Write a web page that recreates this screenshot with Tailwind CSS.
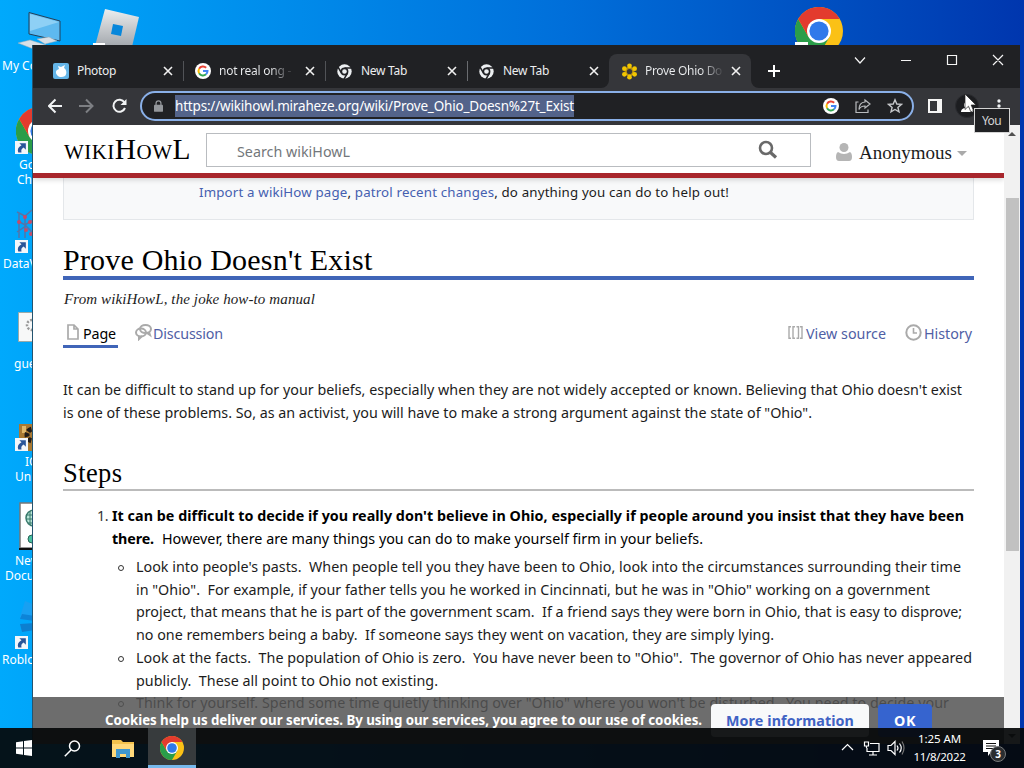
<!DOCTYPE html>
<html lang="en">
<head>
    <meta charset="UTF-8">
    <meta name="viewport" content="width=device-width, initial-scale=1.0">
    <title>Prove Ohio Doesn't Exist - wikiHowL</title>
    <script src="https://cdn.jsdelivr.net/npm/@tailwindcss/browser@4"></script>
</head>
<body class="relative w-[1024px] h-[768px] overflow-hidden bg-linear-to-r from-[#00a9fc] via-[#006fda] via-55% to-[#0036ae] font-['Noto_Sans',sans-serif] whitespace-nowrap">
    <!-- Shared icons -->
    <svg class="hidden">
        <symbol id="chrome" viewBox="0 0 48 48">
            <circle cx="24" cy="24" r="24" fill="#fbc116"/>
            <path d="M24 24 13.6 30 3.2 12A24 24 0 0 0 24 48L34.4 30z" fill="#2a9d49"/>
            <path d="M3.2 12A24 24 0 0 1 44.8 12H24L13.6 30z" fill="#e33b2e"/>
            <circle cx="24" cy="24" r="12" fill="#fff"/>
            <circle cx="24" cy="24" r="9.6" fill="#3079ea"/>
        </symbol>
        <symbol id="chrome-mono" viewBox="0 0 48 48">
            <circle cx="24" cy="24" r="23" fill="#eceff1"/>
            <circle cx="24" cy="24" r="10" fill="none" stroke="#202124" stroke-width="5"/>
            <path d="M24 13h23M14.500 29.500 3 9.500M33.500 29.500 22 49" fill="none" stroke="#202124" stroke-width="5"/>
        </symbol>
        <symbol id="google" viewBox="0 0 48 48">
            <circle cx="24" cy="24" r="24" fill="#fff"/>
            <g fill="none" stroke-width="6">
                <path d="M33.500 14.500A13.500 13.500 0 0 0 12.300 17.300" stroke="#ea4335"/>
                <path d="M12.300 17.300A13.500 13.500 0 0 0 12.300 30.700" stroke="#fbbc05"/>
                <path d="M12.300 30.700A13.500 13.500 0 0 0 33 34" stroke="#34a853"/>
                <path d="M33 34A13.500 13.500 0 0 0 37.500 24H24" stroke="#4285f4"/>
            </g>
        </symbol>
        <symbol id="close" viewBox="0 0 10 10">
            <path d="M1 1l8 8M9 1 1 9" stroke="#f1f1f1" stroke-width="1.6" fill="none"/>
        </symbol>
        <symbol id="shortcut" viewBox="0 0 12 12">
            <path d="M0 0h12v12H0z" fill="#f3f6fa"/>
            <path d="M4 2h6v6L8 6C6 7 5.500 8.500 6 10.500H3C2 8 3 5.500 6 4z" fill="#2a5599"/>
        </symbol>
    </svg>

    <!-- Desktop icons -->
    <div class="text-[12px] leading-[15px] text-white">
        <svg class="absolute left-[16px] top-[10px]" width="48" height="40" viewBox="0 0 48 40">
            <path d="M13 2.500 44 11v20L13 24z" fill="#5eb9ef" stroke="#233f58"/>
            <path d="M14 4 43 12 14 21z" fill="#8ed0f5"/>
            <path d="M21 29l12-2 8 4-12 3zM2 33l12-3 16 5-10 5z" fill="#d8e0e7" stroke="#9aacb9" stroke-width=".5"/>
        </svg>
        <div class="absolute left-[2px] top-[58px]">My Computer</div>
        <svg class="absolute left-[92px] top-[8px]" width="50" height="40" viewBox="0 0 50 40">
            <defs><linearGradient id="rbx" x1="0" y1="0" x2="0" y2="1"><stop stop-color="#eceeef"/><stop offset="1" stop-color="#9a9fa5"/></linearGradient></defs>
            <path d="M13 1 47 9 39 43 3 38z" fill="url(#rbx)"/>
            <path d="M21 16l10 2-2 10-10-2z" fill="#0787db"/>
            <path d="M1 35h12v5H1z" fill="#fff"/><path d="M4 37h7v3H4z" fill="#333"/>
        </svg>
        <svg class="absolute left-[795px] top-[7px]" width="48" height="48"><use href="#chrome"/></svg>
        <div class="absolute left-[795px] top-[42px] w-[13px] h-1 bg-white"></div>
        <svg class="absolute left-[16px] top-[107px]" width="48" height="48"><use href="#chrome"/></svg>
        <svg class="absolute left-[15px] top-[141px]" width="13" height="13"><use href="#shortcut"/></svg>
        <div class="absolute left-[19px] top-[157px]">Google</div>
        <div class="absolute left-[17px] top-[172px]">Chrome</div>
        <svg class="absolute left-[15px] top-[207px]" width="20" height="34" viewBox="0 0 20 34">
            <path d="M2 5l8 4 7-6M3 14l7 4 8-5M2 25l9-6 7 7M10 9v22M4 6v25" fill="none" stroke="#5375aa" stroke-width="1.500"/>
            <g fill="#c64b68"><circle cx="4" cy="15" r="2"/><circle cx="10" cy="10" r="2"/><circle cx="15" cy="15" r="2"/><circle cx="11" cy="23" r="2"/><circle cx="16" cy="27" r="2"/></g>
        </svg>
        <svg class="absolute left-[15px] top-[240px]" width="13" height="13"><use href="#shortcut"/></svg>
        <div class="absolute left-[3px] top-[256px]">DataViz</div>
        <svg class="absolute left-[18px] top-[312px]" width="20" height="30" viewBox="0 0 20 30">
            <path d="M.5.500h22v29H.5z" fill="#f7f8f8" stroke="#9aa"/>
            <circle cx="14" cy="13" r="5" fill="none" stroke="#999" stroke-width="2.500" stroke-dasharray="2 1.500"/>
        </svg>
        <div class="absolute left-[14px] top-[356px]">guest</div>
        <svg class="absolute left-[19px] top-[423px]" width="20" height="28" viewBox="0 0 20 28">
            <path d="M0 1h20v27H0z" fill="#a97932"/>
            <path d="M3 3h4v7H3z" fill="#e0b669"/>
            <circle cx="14" cy="12" r="6" fill="none" stroke="#201b19" stroke-width="5" stroke-dasharray="4 1.500"/>
        </svg>
        <svg class="absolute left-[15px] top-[438px]" width="13" height="13"><use href="#shortcut"/></svg>
        <div class="absolute left-[25px] top-[454px]">IObit</div>
        <div class="absolute left-[15px] top-[469px]">Unlocker</div>
        <svg class="absolute left-[19px] top-[502px]" width="20" height="48" viewBox="0 0 20 48">
            <path d="M1 1h20v45H1z" fill="#fff" stroke="#777" stroke-width="1.500"/>
            <path d="M0 46h20v2H0z" fill="#111"/>
            <circle cx="15" cy="16" r="8" fill="#b9e6d7" stroke="#39796b" stroke-width="1.500"/>
            <path d="M7 13h10M7 17h10M9 21h8M11 9v14" stroke="#39796b"/>
            <circle cx="13" cy="37" r="4" fill="#49c1a2" stroke="#286355"/>
        </svg>
        <div class="absolute left-[15px] top-[553px]">New</div>
        <div class="absolute left-[5px] top-[568px]">Document</div>
        <svg class="absolute left-[19px] top-[600px]" width="16" height="40" viewBox="0 0 16 40">
            <path d="M6 1 16 5v14L1 17z" fill="#18a0f2"/><path d="M3 14l13 2v5L1 19z" fill="#0d84d8"/><path d="M1 24l15-1v7L3 32z" fill="#0c7fd0"/>
        </svg>
        <svg class="absolute left-[15px] top-[636px]" width="13" height="13"><use href="#shortcut"/></svg>
        <div class="absolute left-[2px] top-[652px]">Roblox</div>
    </div>

    <!-- Browser window -->
    <div class="absolute left-[32px] top-[45px] w-[988px] h-[699px] overflow-hidden border-l border-[#24546f] bg-white flex flex-col">
        <!-- Tabs -->
        <div class="h-[43px] shrink-0 bg-[#202124] flex pt-[9px] pl-[10px] text-[12px] text-[#eceef0] leading-[34px]">
            <div class="w-[142px] flex items-center pl-[10px] pr-[12px]">
                <svg width="16" height="16" viewBox="0 0 16 16"><rect width="16" height="16" rx="2" fill="#64b5e8"/><path d="M5 3l3 1 4-2-1 3c3 2 3 6 1 8-3 2-7 1-8-1-2-3-1-5 2-6z" fill="#fff"/></svg>
                <span class="ml-2 flex-1"><span data-w="39">Photop</span></span>
                <svg width="10" height="10"><use href="#close"/></svg>
            </div>
            <div class="w-[142px] flex items-center pl-[10px] pr-[12px] relative">
                <div class="absolute left-[-2px] top-[7px] w-px h-5 bg-[#515357]"></div>
                <svg width="16" height="16"><use href="#google"/></svg>
                <span class="ml-2 flex-1 bg-linear-to-r from-[#eceef0] from-60% to-[#45464a] to-80% bg-clip-text text-transparent"><span data-w="72">not real ong -</span></span>
                <svg width="10" height="10"><use href="#close"/></svg>
            </div>
            <div class="w-[142px] flex items-center pl-[10px] pr-[12px] relative">
                <div class="absolute left-[-2px] top-[7px] w-px h-5 bg-[#515357]"></div>
                <svg width="15" height="15"><use href="#chrome-mono"/></svg>
                <span class="ml-[9px] flex-1"><span data-w="46">New Tab</span></span>
                <svg width="10" height="10"><use href="#close"/></svg>
            </div>
            <div class="w-[142px] flex items-center pl-[10px] pr-[12px] relative">
                <div class="absolute left-[-2px] top-[7px] w-px h-5 bg-[#6a6c70]"></div>
                <svg width="15" height="15"><use href="#chrome-mono"/></svg>
                <span class="ml-[9px] flex-1"><span data-w="46">New Tab</span></span>
                <svg width="10" height="10"><use href="#close"/></svg>
            </div>
            <div class="w-[142px] flex items-center pl-[12px] pr-[10px] bg-[#35363a] rounded-t-lg relative ml-[-2px]">
                <svg class="absolute -left-2 bottom-0" width="8" height="8"><path d="M8 0v8H0a8 8 0 0 0 8-8" fill="#35363a"/></svg>
                <svg class="absolute -right-2 bottom-0" width="8" height="8"><path d="M0 0v8h8a8 8 0 0 1-8-8" fill="#35363a"/></svg>
                <svg width="17" height="17" viewBox="0 0 18 18" fill="#f2c600"><circle cx="9" cy="9" r="4" fill="none" stroke="#b28c12" stroke-width="2.500"/><circle cx="9" cy="3" r="2.500"/><circle cx="9" cy="15" r="2.500"/><circle cx="3.600" cy="6" r="2.500"/><circle cx="14.400" cy="6" r="2.500"/><circle cx="3.600" cy="12" r="2.500"/><circle cx="14.400" cy="12" r="2.500"/></svg>
                <span class="ml-[7px] flex-1 bg-linear-to-r from-[#eceef0] from-65% to-[#45464a] to-90% bg-clip-text text-transparent"><span data-w="77">Prove Ohio Do</span></span>
                <svg width="10" height="10"><use href="#close"/></svg>
            </div>
            <svg class="ml-[17px] mt-[11px]" width="12" height="12"><path d="M6 0v12M0 6h12" stroke="#fff" stroke-width="2"/></svg>
            <svg class="ml-[74px]" width="160" height="20" viewBox="0 0 160 20" fill="none" stroke="#f4f4f4" stroke-width="1.200">
                <path d="M1 3.500l5 5.500 5-5.500M47 6.500h10M93.500 1.500h9v9h-9zM139 1l10 10M149 1l-10 10"/>
            </svg>
        </div>
        <!-- Toolbar -->
        <div class="h-[37px] shrink-0 bg-[#35363a] flex items-center pl-[15px] pb-px">
            <svg width="80" height="18" viewBox="0 0 80 18" fill="none" stroke-width="2">
                <path d="M14 9H1M7.500 2.500 1 9l6.500 6.500" stroke="#f1f3f4"/>
                <path d="M31 9h13M38 2.500 44.500 9 38 15.500" stroke="#7d7f83"/>
                <path d="M76.500 5.500A6 6 0 1 0 77 11" stroke="#f1f3f4"/>
                <path d="M78.500 2v6h-6z" fill="#f1f3f4"/>
            </svg>
            <div class="ml-[12px] w-[774px] h-[30px] rounded-full border-2 border-[#8ab0e8] bg-[#202124] flex items-center pl-[12px]">
                <svg class="mb-px" width="9" height="12" viewBox="0 0 10 13"><path d="M1 5h8q1 0 1 1v6q0 1-1 1H1q-1 0-1-1V6q0-1 1-1" fill="#94979b"/><path d="M2.300 6V3.500a2.700 2.700 0 0 1 5.400 0V6" fill="none" stroke="#94979b" stroke-width="1.400"/></svg>
                <div class="ml-[12px] h-[22px] bg-[#53638a] text-white text-[13.5px] leading-[22px]"><span data-w="399">https://wikihowl.miraheze.org/wiki/Prove_Ohio_Doesn%27t_Exist</span></div>
                <svg class="ml-auto" width="16" height="16"><use href="#google"/></svg>
                <svg class="ml-[16px]" width="16" height="16" viewBox="0 0 16 16" fill="none" stroke="#b9bbbe" stroke-width="1.200"><path d="M3.500 4H1v10.500h12v-3M10 2l5 4-5 4V8C7 8 5 9 4 11.500 4 7 6.500 4.300 10 4z"/></svg>
                <svg class="ml-[16px] mr-[9px]" width="16" height="16" viewBox="0 0 16 16" fill="none" stroke="#c6c8cb" stroke-width="1.400"><path d="M8 1.800l1.800 4.200 4.600.4-3.500 3 1.100 4.500L8 11.500l-4 2.400 1.100-4.500-3.500-3L6.200 6z"/></svg>
            </div>
            <svg class="ml-[14px]" width="14" height="14"><path d="M0 0h14v14H0z" fill="#f5f5f5"/><path d="M2 2h7v10H2z" fill="#35363a"/></svg>
            <div class="ml-[13px] w-[24px] h-[24px] rounded-full bg-[#1c1d20] border border-[#2a2b2f] flex items-end justify-center pb-[5px]">
                <svg width="14" height="10"><circle cx="7" cy="3" r="3" fill="#fff"/><path d="M1 10c0-6 12-6 12 0z" fill="#fff"/></svg>
            </div>
            <svg class="ml-[18px]" width="4" height="16" fill="#f1f3f4"><circle cx="2" cy="3" r="1.700"/><circle cx="2" cy="8" r="1.700"/><circle cx="2" cy="13" r="1.700"/></svg>
        </div>

        <div class="flex flex-1 min-h-0">
            <div class="w-[971px] relative overflow-hidden text-[#1c1c1c]">
                <!-- Site header -->
                <div class="h-[53px] border-b-[5px] border-[#a8262c] flex items-center pl-[31px] relative shadow-[0_2px_5px_rgba(0,0,0,.15)] bg-white">
                    <div class="w-[142px] text-[29.5px] leading-[48px] text-black font-['Liberation_Serif',serif] [font-variant:small-caps]"><span data-w="127">wikiHowL</span></div>
                    <div class="w-[605px] h-[34px] mt-[2px] border border-[#b9bcc0] flex items-center pl-[30px] text-[14.3px] text-[#73777b]">
                        <span class="mt-[3px]" data-w="113">Search wikiHowL</span>
                        <svg class="ml-auto mr-[32px]" width="20" height="20" viewBox="0 0 20 20" fill="none" stroke="#696969"><circle cx="8" cy="8" r="6" stroke-width="2.600"/><path d="M12.500 12.500l5.500 5" stroke-width="3.200"/></svg>
                    </div>
                    <svg class="ml-[25px] mt-[6px]" width="16" height="18" viewBox="0 0 16 18" fill="#b5b5b5"><circle cx="8" cy="4.500" r="4.500"/><path d="M2 9q6 4 12 0 2 1 2 5 0 4-3 4H3q-3 0-3-4 0-4 2-5"/></svg>
                    <span class="ml-[7px] mt-[9px] text-[19px] font-['Liberation_Serif',serif]"><span data-w="93">Anonymous</span></span>
                    <svg class="ml-[5px] mt-[8px]" width="10" height="5"><path d="M0 0h10L5 5z" fill="#aaa"/></svg>
                </div>
                <!-- Article -->
                <div class="ml-[30px] w-[911px] text-[14.3px]">
                    <div class="h-[42px] bg-[#f8f9fa] border border-t-0 border-[#e4e7ea] pl-[135px] leading-[28px] text-[13.3px]">
                        <span data-w="530"><span class="text-[#4560b0]">Import a wikiHow page</span>, <span class="text-[#4560b0]">patrol recent changes</span>, do anything you can do to help out!</span>
                    </div>
                    <h1 class="h-[60px] border-b-4 border-[#4065b8] pt-[22px] text-[30px] leading-[35px] text-black font-['Liberation_Serif',serif]"><span data-w="309.5">Prove Ohio Doesn't Exist</span></h1>
                    <div class="h-[38px] pl-px leading-[38px] text-[15px] italic font-['Liberation_Serif',serif]"><span data-w="251">From wikiHowL, the joke how-to manual</span></div>
                    <div class="h-[30px] flex leading-[31px] text-[#5060a5]">
                        <div class="w-[55px] border-b-3 border-[#4065b8] flex text-black pl-[4px]">
                            <svg class="mt-[6px] mr-[4px]" width="12" height="16" viewBox="0 0 12 16" fill="none" stroke="#aaa" stroke-width="1.700"><path d="M1 1h6l4 4v10H1zM7 1v4h4"/></svg>
                            <span data-w="33">Page</span>
                        </div>
                        <svg class="ml-[17px] mt-[6px] mr-[1px]" width="17" height="17" viewBox="0 0 17 17" fill="none" stroke="#aaa" stroke-width="2"><ellipse cx="10.500" cy="5" rx="5.500" ry="4"/><ellipse cx="6" cy="8.500" rx="5" ry="4"/><path d="M4 12v3l3-3M14 8l1 3-3-2"/></svg>
                        <span data-w="70">Discussion</span>
                        <svg class="ml-auto mt-[8px] mr-[3px]" width="15" height="13" fill="none" stroke="#aaa" stroke-width="1.400"><path d="M3 .7H1v11.600h2M7 .7H5v11.600h2M8.500.7h2v11.600h-2M12 .7h2v11.600h-2"/></svg>
                        <span data-w="80">View source</span>
                        <svg class="ml-[19px] mt-[6px] mr-[2px]" width="17" height="17" fill="none" stroke="#aaa"><circle cx="8.500" cy="8.500" r="7.200" stroke-width="2"/><path d="M8.500 4v5H12" stroke-width="1.600"/></svg>
                        <span class="mr-[2px]" data-w="48">History</span>
                    </div>
                    <div class="mt-[30px] leading-[23px]">
                        <div><span data-w="899">It can be difficult to stand up for your beliefs, especially when they are not widely accepted or known. Believing that Ohio doesn't exist</span></div>
                        <div><span data-w="749">is one of these problems. So, as an activist, you will have to make a strong argument against the state of "Ohio".</span></div>
                    </div>
                    <h2 class="mt-[30px] pt-[4px] border-b-2 border-[#bbb] text-[26.5px] leading-[31px] text-black font-['Liberation_Serif',serif]"><span data-w="59.5">Steps</span></h2>
                    <div class="mt-[13px] leading-[23px] flex text-black">
                        <div class="w-[49px] shrink-0 pl-[34px] text-[#333]"><span data-w="11">1.</span></div>
                        <div>
                            <div class="font-bold"><span data-w="852">It can be difficult to decide if you really don't believe in Ohio, especially if people around you insist that they have been</span></div>
                            <div><b data-w="42">there.</b><span class="ml-[8px]" data-w="541">However, there are many things you can do to make yourself firm in your beliefs.</span></div>
                        </div>
                    </div>
                    <div class="mt-[6px] pl-[55px] leading-[22.7px]">
                        <div class="flex">
                            <div class="mt-[9px] mr-[12px] w-[6px] h-[6px] shrink-0 rounded-full border border-[#333]"></div>
                            <div>
                                <div><span data-w="825">Look into people's pasts.&nbsp; When people tell you they have been to Ohio, look into the circumstances surrounding their time</span></div>
                                <div><span data-w="794">in "Ohio".&nbsp; For example, if your father tells you he worked in Cincinnati, but he was in "Ohio" working on a government</span></div>
                                <div><span data-w="826">project, that means that he is part of the government scam.&nbsp; If a friend says they were born in Ohio, that is easy to disprove;</span></div>
                                <div><span data-w="638">no one remembers being a baby.&nbsp; If someone says they went on vacation, they are simply lying.</span></div>
                            </div>
                        </div>
                        <div class="flex">
                            <div class="mt-[9px] mr-[12px] w-[6px] h-[6px] shrink-0 rounded-full border border-[#333]"></div>
                            <div>
                                <div><span data-w="836">Look at the facts.&nbsp; The population of Ohio is zero.&nbsp; You have never been to "Ohio".&nbsp; The governor of Ohio has never appeared</span></div>
                                <div><span data-w="302">publicly.&nbsp; These all point to Ohio not existing.</span></div>
                            </div>
                        </div>
                        <div class="flex">
                            <div class="mt-[9px] mr-[12px] w-[6px] h-[6px] shrink-0 rounded-full border border-[#333]"></div>
                            <span data-w="813">Think for yourself. Spend some time quietly thinking over "Ohio" where you won't be disturbed.&nbsp; You need to decide your</span>
                        </div>
                    </div>
                </div>
                <!-- Cookie notice -->
                <div class="absolute left-0 bottom-0 w-full h-[47px] bg-[#545454]/85 flex pl-[72px] pt-[7px] text-[13.3px] font-bold text-white leading-[33px]">
                    <span class="w-[606px]"><span data-w="597">Cookies help us deliver our services. By using our services, you agree to our use of cookies.</span></span>
                    <div class="w-[158px] h-[33px] rounded-sm bg-[#f8f9fa] text-[#3f62c4] pl-[15px] text-[14.3px]"><span data-w="128">More information</span></div>
                    <div class="ml-[9px] w-[54px] h-[33px] rounded-sm bg-[#3664cf] pl-[16px] text-[14.3px]"><span data-w="22">OK</span></div>
                </div>
            </div>
            <!-- Scrollbar -->
            <div class="w-[16px] bg-[#f1f1f1] flex flex-col items-center">
                <svg class="mt-[7px]" width="8" height="4"><path d="M0 4h8L4 0z" fill="#505050"/></svg>
                <div class="mt-[62px] w-[13px] h-[353px] bg-[#c1c1c1]"></div>
                <svg class="mt-auto mb-[6px]" width="8" height="4"><path d="M0 0h8L4 4z" fill="#505050"/></svg>
            </div>
        </div>
    </div>

    <!-- Tooltip and pointer -->
    <div class="absolute left-[974px] top-[108px] w-[36px] h-[25px] bg-[#202124] border border-[#d4d4d4] text-[#d5d5d5] text-[12px] leading-[23px] pl-[7px]"><span data-w="19">You</span></div>
    <svg class="absolute left-[964px] top-[93px]" width="13" height="20" viewBox="0 0 13 20"><path d="M1 1v15.500l3.500-3.300 2.300 5.600 2.700-1.200L7.200 12H12z" fill="#fff" stroke="#222" stroke-width=".7"/></svg>

    <!-- Taskbar -->
    <div class="absolute left-0 bottom-0 w-full h-[40px] bg-[#050709]/93 flex items-center text-white">
        <svg class="ml-[16px]" width="16" height="16" fill="#fff"><path d="M0 2.300 7 1.300V7.600H0zM8 1.100 16 0v7.600H8zM0 8.500h7v6.300L0 13.800zM8 8.500h8V16l-8-1.100z"/></svg>
        <svg class="ml-[32px]" width="17" height="17" fill="none" stroke="#fff" stroke-width="1.500"><circle cx="10.500" cy="6" r="5"/><path d="M7 10 .8 16.200"/></svg>
        <svg class="ml-[31px]" width="22" height="19" viewBox="0 0 22 19"><path d="M0 1h9l2 2h11v15H0z" fill="#f3c24d"/><path d="M0 5h22v13H0z" fill="#ffd97a"/><path d="M4 19v-9h14v9h-4v-4H8v4z" fill="#3f97cf"/></svg>
        <div class="ml-[14px] w-[48px] h-full bg-[#373b3d] border-b-3 border-[#76b9ed] flex items-center justify-center">
            <svg class="mt-[3px]" width="24" height="24"><use href="#chrome"/></svg>
        </div>
        <svg class="ml-auto" width="64" height="16" viewBox="0 0 64 16" fill="none" stroke="#fff" stroke-width="1.200">
            <path d="M1 10l5.500-5.500L12 10"/>
            <path d="M29 3.500h9v8H26V8M32 11.500V15M28 15h8M23.500 2h4v4h-4zM25.500 6v2"/>
            <path d="M47 5.500h3l4-4v13l-4-4h-3zM56 5.500q2 2.500 0 5M58.500 3.500q3.500 4.500 0 9"/>
            <path d="M61 1.500q4 6.500 0 13" stroke="#777"/>
        </svg>
        <div class="ml-[8px] w-[53px] text-center text-[11.5px] leading-[18px]"><div><span data-w="43">1:25 AM</span></div><div><span data-w="52">11/8/2022</span></div></div>
        <div class="ml-[17px] mr-[16px] w-[25px] h-[30px] relative">
            <svg class="absolute left-0 top-[7px]" width="17" height="17"><path d="M0 0h16v12H8l-3 4v-4H0z" fill="#fff"/><path d="M3 3.500h10M3 6h10M3 8.500h10" stroke="#111"/></svg>
            <div class="absolute left-[7px] top-[13px] w-4 h-4 rounded-full bg-[#2a2d30] border border-[#77797b] text-[10px] leading-[14px] text-center font-bold">3</div>
        </div>
    </div>

    <script>
        // Spread each label to its set width
        function fitLabels() {
            document.querySelectorAll("[data-w]").forEach(el => {
                // flex items may be stretched or shrunk, so measure the text itself
                const range = document.createRange();
                range.selectNodeContents(el);
                let gap = 0.001;
                for (let pass = 0; pass < 2; pass++) {
                    el.style.letterSpacing = gap + "px";
                    gap += (Number(el.dataset.w) - range.getBoundingClientRect().width) / el.textContent.length;
                }
                el.style.letterSpacing = gap.toFixed(3) + "px";
            });
        }
        fitLabels();
        window.addEventListener("load", () => {
            fitLabels();
            document.fonts.ready.then(fitLabels);
            requestAnimationFrame(fitLabels);
        });
    </script>
</body>
</html>
